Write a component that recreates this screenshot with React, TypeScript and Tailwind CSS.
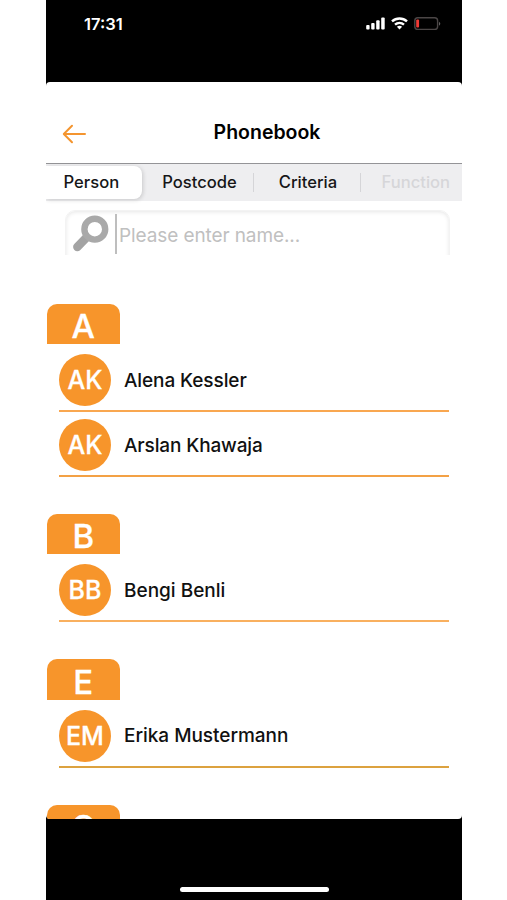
import React from "react";

type Person = { initials: string; name: string; top: string; line: string; tracking: string };
type Group = { letter: string; height: string; people: Person[] };

const groups: Group[] = [
  {
    letter: "A",
    height: "h-[210px]",
    people: [
      { initials: "AK", name: "Alena Kessler", top: "pt-[10px]", line: "bg-[#f9a750]", tracking: "tracking-[-0.1px]" },
      { initials: "AK", name: "Arslan Khawaja", top: "pt-[7px]", line: "bg-[#f3a145]", tracking: "tracking-[-0.13px]" },
    ],
  },
  {
    letter: "B",
    height: "h-[145.5px]",
    people: [{ initials: "BB", name: "Bengi Benli", top: "pt-[10px]", line: "bg-[#f9b05f]", tracking: "tracking-[0px]" }],
  },
  {
    letter: "E",
    height: "h-[145.5px]",
    people: [{ initials: "EM", name: "Erika Mustermann", top: "pt-[10px]", line: "bg-[#dca23f]", tracking: "tracking-[-0.03px]" }],
  },
  { letter: "G", height: "h-[145.5px]", people: [] },
];

function StatusBar() {
  return (
    <div className="flex h-[82px] shrink-0 items-start justify-between bg-black pl-[38px] pr-[21px] text-white">
      <span className="mt-[12px] text-[16.5px] leading-[24px] font-semibold">17:31</span>
      <svg className="mt-[16px]" width="75" height="16" viewBox="0 0 75 16">
        <g fill="#fff">
          <rect x="0.2" y="9" width="3.4" height="4.6" rx="1" />
          <rect x="5.2" y="7" width="3.4" height="6.6" rx="1" />
          <rect x="10.2" y="4.3" width="3.4" height="9.3" rx="1" />
          <rect x="15.2" y="1.5" width="3.5" height="12.1" rx="1" />
        </g>
        <g fill="none" stroke="#fff" strokeWidth="2.4">
          <path d="M26 5.4a11 11 0 0 1 15 0" />
          <path d="M29 8.7a6.8 6.8 0 0 1 9 0" />
        </g>
        <path d="M30.9 10.8a4 4 0 0 1 5.2 0l-2.6 2.7z" fill="#fff" />
        <rect x="48.8" y="1.8" width="22.8" height="11.6" rx="3" fill="none" stroke="#4b4646" strokeWidth="1.4" />
        <rect x="50.2" y="3.6" width="2.9" height="7.9" rx="1" fill="#f03a35" />
        <path d="M73 5.7q2.6 2 0 4z" fill="#625f5f" />
      </svg>
    </div>
  );
}

function Tabs() {
  return (
    <div className="flex h-[38px] shrink-0 border-t-[1.5px] border-[#949497] bg-[#eeeef0] text-[16.6px] font-medium text-[#161618]">
      <div className="flex w-[96px] items-start">
        <div className="mt-[2px] flex h-[33px] w-full items-center rounded-r-[8px] bg-white pl-[17.5px] shadow-[1px_1px_4px_rgba(0,0,0,0.16)]">
          <span>Person</span>
        </div>
      </div>
      <div className="flex w-[111px] items-center justify-center pl-[4px]">Postcode</div>
      <div className="my-auto h-[19px] w-px bg-[#d5d5d8]" />
      <div className="flex w-[106px] items-center justify-center pl-[2px]">Criteria</div>
      <div className="my-auto h-[19px] w-px bg-[#d5d5d8]" />
      <div className="flex flex-1 items-center pl-[20.5px] text-[#d6d6d9]">Function</div>
    </div>
  );
}

function SearchField() {
  return (
    <div className="ml-[19px] mt-[9px] h-[45px] w-[385px] shrink-0 overflow-hidden">
      <div className="flex h-[60px] rounded-[10px] border border-[#f3f3f3] shadow-[inset_0_1px_4px_rgba(0,0,0,0.1)]">
        <svg className="ml-[5px] mt-[2.5px]" width="42" height="40" viewBox="0 0 42 40">
          <path d="M15.5 23.5L6.3 33" stroke="#a3a3a3" strokeWidth="8.4" strokeLinecap="round" />
          <circle cx="23.8" cy="15.2" r="10.4" fill="#fff" stroke="#a9a9a9" strokeWidth="6.4" />
        </svg>
        <div className="ml-[2px] mt-[3px] h-[40px] w-[2px] bg-[#bebebe]" />
        <span className="ml-[2px] mt-[11px] text-[19px] leading-[28px] tracking-[-0.1px] text-[#c0c0c0]">Please enter name...</span>
      </div>
    </div>
  );
}

function PersonRow({ person }: { person: Person }) {
  return (
    <div className={`ml-[13px] w-[390px] ${person.top}`}>
      <div className="flex items-center">
        <div className="flex size-[52px] items-center justify-center rounded-full bg-[#f7952b] pt-[2px] text-[25px] font-medium text-white [-webkit-text-stroke:0.3px_white]">
          {person.initials}
        </div>
        <span className={`ml-[13px] pt-[2px] text-[19px] font-medium text-[#111] ${person.tracking}`}>{person.name}</span>
      </div>
      <div className={`mt-[4px] h-[2px] ${person.line}`} />
    </div>
  );
}

export default function App() {
  return (
    <div className="flex h-[900px] w-[507px] justify-center overflow-hidden bg-white pl-px font-['Inter','Liberation_Sans',sans-serif]">
      <div className="flex h-full w-[416px] flex-col bg-black">
        <StatusBar />
        <main className="flex h-[737px] shrink-0 flex-col overflow-hidden rounded-[4px] bg-white">
          <header className="grid h-[81px] shrink-0 grid-cols-[78px_1fr_78px] items-center pt-[19px]">
            <svg className="ml-[16px] mt-[3px]" width="25" height="20" viewBox="0 0 25 20" fill="none" stroke="#f4952f" strokeWidth="2" strokeLinecap="round" strokeLinejoin="round">
              <path d="M23 10H2M10 1.8L1.8 10l8.2 8.2" />
            </svg>
            <h1 className="ml-[26px] pt-[2px] text-center text-[19.5px] font-semibold text-black">Phonebook</h1>
          </header>
          <Tabs />
          <SearchField />
          <div className="mt-[48.5px] min-h-0 flex-1">
            {groups.map((group) => (
              <section key={group.letter} className={group.height}>
                <div className="ml-[1px] flex h-[40.5px] w-[72.5px] items-center justify-center rounded-t-[10px] bg-[#f7952b] pt-[5px] text-[33px] leading-[40px] font-medium text-white [-webkit-text-stroke:0.3px_white]">
                  {group.letter}
                </div>
                {group.people.map((person) => (
                  <PersonRow key={person.name} person={person} />
                ))}
              </section>
            ))}
          </div>
        </main>
        <div className="flex flex-1 items-end justify-center bg-black pb-[8px]">
          <div className="h-[5px] w-[149px] rounded-full bg-white" />
        </div>
      </div>
    </div>
  );
}
